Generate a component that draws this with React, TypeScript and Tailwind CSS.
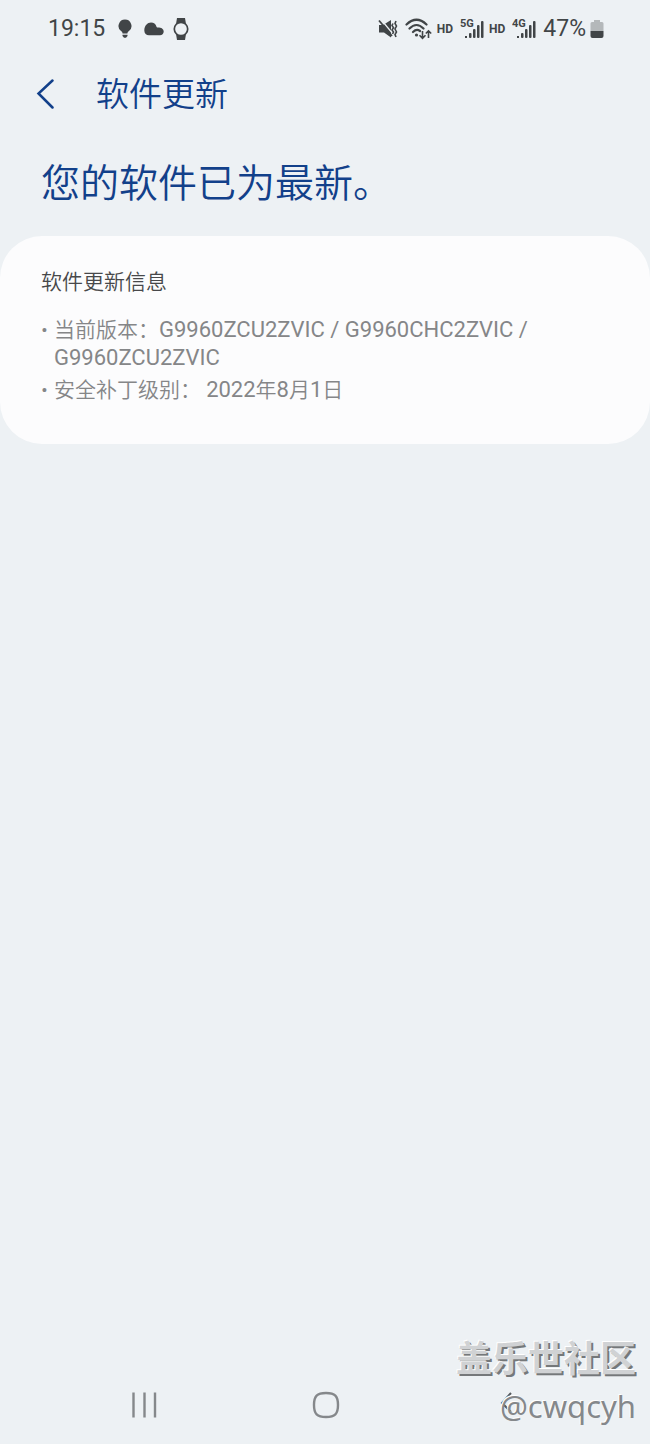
const versions = 'G9960ZCU2ZVIC / G9960CHC2ZVIC / G9960ZCU2ZVIC'

function SignalIcon({ label }: { label: string }) {
  return (
    <svg width="25" height="24" viewBox="0 0 25 24" fill="currentColor" aria-hidden="true">
      <text x="0" y="10" fontSize="11" fontWeight="700" fontFamily="Roboto, sans-serif">
        {label}
      </text>
      <rect x="5" y="19" width="2" height="2" />
      <rect x="9" y="16" width="2.500" height="5" rx="1" />
      <rect x="13" y="12" width="2.500" height="9" rx="1" />
      <rect x="17" y="8" width="2.500" height="13" rx="1" />
      <rect x="21" y="4" width="2.500" height="17" rx="1" />
    </svg>
  )
}

function StatusBar() {
  return (
    <div className="flex h-[58px] items-center justify-between pl-12 pr-[46px] text-[23px] leading-7 text-[#414547]">
      <div className="flex items-center">
        <span>19:15</span>
        <svg className="ml-[13px]" width="14" height="20" viewBox="0 0 14 20" fill="currentColor" aria-hidden="true">
          <path d="M7 0.500a6.500 6.500 0 0 0-4 11.600c1 .8 1.400 1.300 1.600 2.400h4.800c.2-1.100.6-1.600 1.600-2.400a6.500 6.500 0 0 0-4-11.600z" />
          <path d="M4.500 15.800h5v1.200l-1.500 1.800H6L4.500 17z" />
        </svg>
        <svg className="ml-3" width="20" height="14" viewBox="0 0 20 14" fill="currentColor" aria-hidden="true">
          <path d="M5 13.300C2.300 13.300.300 11.300.300 8.500.300 3.500 3.500.500 7 .500c2.800 0 4.800 1.500 5.300 3.800.2.900.7 1.200 1.500 1.200 3.600 0 5.900 1.500 5.900 4.100 0 2.400-1.700 3.700-3.700 3.700z" />
        </svg>
        <svg className="ml-2" width="18" height="24" viewBox="0 0 18 24" aria-hidden="true">
          <path fill="currentColor" d="M5 1h8l1 6H4zM4 17h10l-1 6H5z" />
          <circle cx="9" cy="12" r="6.700" fill="#edf1f4" stroke="currentColor" strokeWidth="1.700" />
        </svg>
      </div>
      <div className="flex items-center">
        <svg width="20" height="20" viewBox="0 0 20 20" aria-hidden="true">
          <path fill="currentColor" d="M1 6h4l8-5v17.500L6 13.500H1z" />
          <path fill="none" stroke="#edf1f4" strokeWidth="1.200" d="M3 .500l12 14.500" />
          <path fill="none" stroke="currentColor" strokeWidth="1.800" d="M1 1.500l13 15.500" />
          <path fill="none" stroke="currentColor" strokeWidth="1.600" d="M15 4.500l-1 2 1.500 2.200-1.500 2.300 1.500 2-1 2M18 2l-1 2.500 1.500 2.500-1.500 3 1.500 3-1.500 2.500 1 2.500" />
        </svg>
        <svg className="ml-[7px]" width="28" height="22" viewBox="0 0 28 22" fill="none" stroke="currentColor" aria-hidden="true">
          <path strokeWidth="2.200" strokeLinecap="round" d="M1.500 6.500Q11.500 -3 21.500 6.500M4.500 10.500Q11.500 3.500 18.500 10.500M8 14Q11.500 10.500 15 13" />
          <circle cx="11.500" cy="17" r="1.600" fill="currentColor" stroke="none" />
          <path strokeWidth="1.600" d="M17.500 13v7M14.500 17.300l3 3 3-3M23.500 20v-7M20.800 15.500l2.700-2.700 2.700 2.700" />
        </svg>
        <span className="ml-1 text-xs font-bold">HD</span>
        <span className="ml-[7px]">
          <SignalIcon label="5G" />
        </span>
        <span className="ml-1 text-xs font-bold">HD</span>
        <span className="ml-[7px]">
          <SignalIcon label="4G" />
        </span>
        <span className="ml-[6px]">47%</span>
        <svg className="ml-1" width="14" height="20" viewBox="0 0 14 20" aria-hidden="true">
          <path fill="#b4b8ba" d="M4 1h6v2h2q1.500 0 1.500 1.500V12H.500V4.500Q.500 3 2 3h2z" />
          <path fill="currentColor" d="M.500 12h13v5q0 2-2 2h-9q-2 0-2-2z" />
        </svg>
      </div>
    </div>
  )
}

function NavBar() {
  return (
    <nav className="grid h-[78px] grid-cols-[54px_1fr_1fr_1fr_52px] items-center text-[#85888b]">
      <button type="button" aria-label="最近" className="col-start-2 flex justify-center">
        <svg width="28" height="28" viewBox="0 0 28 28" fill="none" stroke="currentColor" strokeWidth="2.400">
          <path d="M2.500 1.500v25M13.500 1.500v25M24 1.500v25" />
        </svg>
      </button>
      <button type="button" aria-label="主屏幕" className="flex justify-center">
        <svg width="28" height="28" viewBox="0 0 28 28" fill="none" stroke="currentColor" strokeWidth="2.400">
          <path d="M14 2C23 2 26 5 26 14s-3 12-12 12S2 23 2 14 5 2 14 2z" />
        </svg>
      </button>
      <button type="button" aria-label="返回" className="flex justify-center">
        <svg width="14" height="28" viewBox="0 0 14 28" fill="none" stroke="#55595c" strokeWidth="2">
          <path d="M11 2L2 12l9 9" />
        </svg>
      </button>
    </nav>
  )
}

export default function App() {
  return (
    <div className="relative flex min-h-screen flex-col bg-[#edf1f4] font-[Roboto,'Noto_Sans_CJK_SC',sans-serif]">
      <StatusBar />
      <header className="flex h-[74px] items-center pl-9 text-[#12408a]">
        <button type="button" aria-label="返回">
          <svg width="20" height="32" viewBox="0 0 20 32" fill="none" stroke="currentColor" strokeWidth="2.500" strokeLinecap="round">
            <path d="M16.500 1.500L2.500 14.500L16.500 28.500" />
          </svg>
        </button>
        <h1 className="ml-10 text-[33px] font-[350] leading-10">软件更新</h1>
      </header>
      <main className="flex-1">
        <h2 className="px-[41px] pt-[22px] text-[39px] font-[350] leading-[60px] text-[#12408a]">您的软件已为最新。</h2>
        <section className="mt-[22px] rounded-[42px] bg-[#fcfcfd] px-[41px] pb-10 pt-8 text-[21px] font-[350] leading-7">
          <h3 className="text-[#47484a]">软件更新信息</h3>
          <ul className="mt-5 space-y-1 text-[#858688]">
            <li className="flex">
              <span className="w-[13px] shrink-0">•</span>
              <span className="max-w-[500px]">
                当前版本：<span className="text-[22px] font-normal">{versions}</span>
              </span>
            </li>
            <li className="flex">
              <span className="w-[13px] shrink-0">•</span>
              <span>
                安全补丁级别： <span className="text-[22px] font-normal">2022</span>年
                <span className="text-[22px] font-normal">8</span>月
                <span className="text-[22px] font-normal">1</span>日
              </span>
            </li>
          </ul>
        </section>
      </main>
      <NavBar />
      <div className="pointer-events-none absolute bottom-4 right-[14px] text-right text-[#d0d2d4]">
        <p className="text-4xl leading-[48px] font-bold [text-shadow:-1px_-1px_0_#fff,2px_2px_0_#75787a]">盖乐世社区</p>
        <p className="font-['Noto_Sans',sans-serif] text-[31px] leading-[44px] text-[#85888b] [text-shadow:-1px_-1px_0_#fff]">@cwqcyh</p>
      </div>
    </div>
  )
}
